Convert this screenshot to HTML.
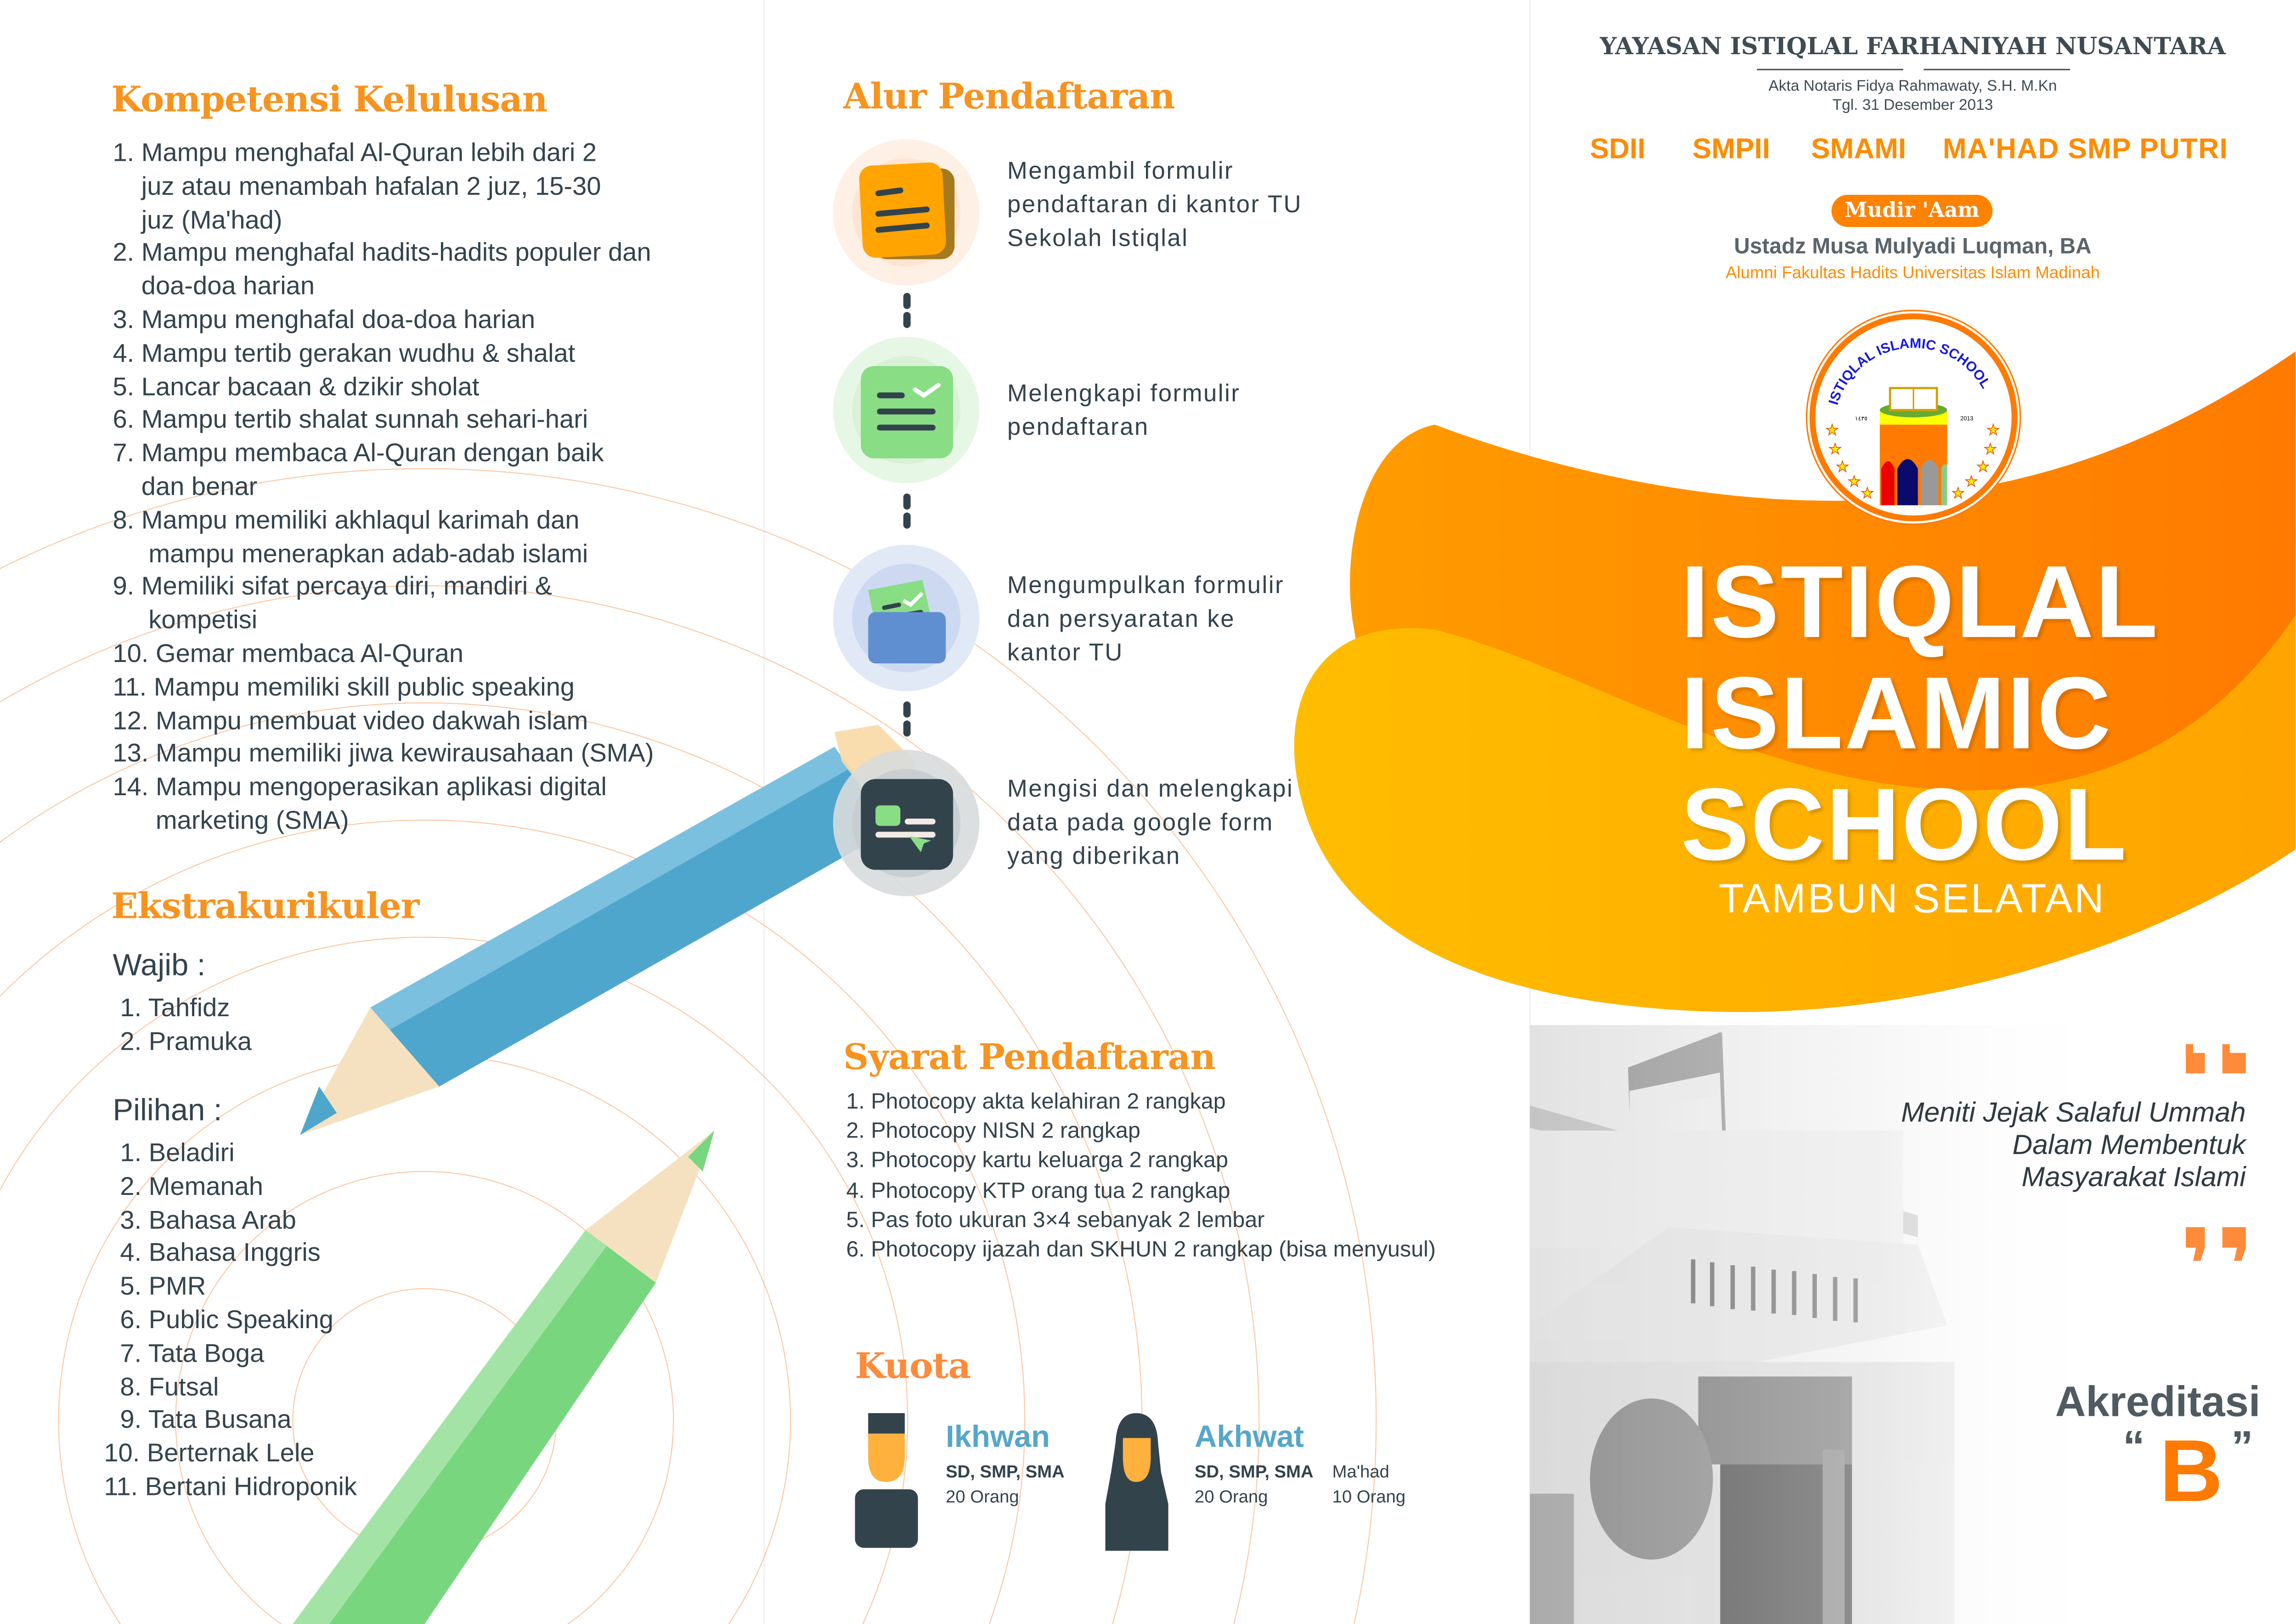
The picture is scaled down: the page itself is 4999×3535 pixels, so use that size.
<!DOCTYPE html>
<html><head><meta charset="utf-8">
<style>
html,body{margin:0;padding:0;background:#fff;overflow:hidden;width:4999px;height:3535px}
#wrap{width:1568px;height:1109px;position:absolute;left:0;top:0;overflow:hidden;transform:scale(3.18756);transform-origin:0 0;font-family:"Liberation Sans","DejaVu Sans",sans-serif;color:#33434c}
.abs{position:absolute;white-space:nowrap}
.h{font-family:"DejaVu Serif","Liberation Serif",serif;font-weight:bold;color:#f7931e;letter-spacing:-0.3px}
.list{font-size:17.6px;line-height:22.8px;color:#33434c}
.step{font-size:16.5px;line-height:23px;letter-spacing:0.8px}
</style></head><body><div id="wrap">

<svg class="abs" style="left:0;top:0" width="1568" height="1109" viewBox="0 0 1568 1109">
 <line x1="522" y1="0" x2="522" y2="1109" stroke="#f0f0f0" stroke-width="1"/>
 <line x1="1045" y1="0" x2="1045" y2="1109" stroke="#f0f0f0" stroke-width="1"/>
 <g fill="none" stroke="#f9a66c" stroke-width="0.7" opacity="0.6">
  <circle cx="290" cy="970" r="90"/>
  <circle cx="290" cy="970" r="170"/>
  <circle cx="290" cy="970" r="250"/>
  <circle cx="290" cy="970" r="330"/>
  <circle cx="290" cy="970" r="410"/>
  <circle cx="290" cy="970" r="490"/>
  <circle cx="290" cy="970" r="570"/>
  <circle cx="290" cy="970" r="650"/>
 </g>
 <defs>
  <linearGradient id="g1" x1="0" y1="0" x2="1" y2="0"><stop offset="0" stop-color="#ff9c00"/><stop offset="1" stop-color="#ff7a00"/></linearGradient>
  <linearGradient id="g2" x1="0" y1="0" x2="1" y2="0"><stop offset="0" stop-color="#ffbd00"/><stop offset="1" stop-color="#ffa400"/></linearGradient>
  <linearGradient id="ph" x1="0" y1="0" x2="1" y2="0"><stop offset="0" stop-color="#e2e2e2"/><stop offset="0.55" stop-color="#f2f2f2"/><stop offset="1" stop-color="#ffffff"/></linearGradient>
  <linearGradient id="fade" x1="0" y1="0" x2="1" y2="0"><stop offset="0" stop-color="#fff" stop-opacity="0"/><stop offset="0.6" stop-color="#fff" stop-opacity="0.3"/><stop offset="1" stop-color="#fff" stop-opacity="1"/></linearGradient>
 </defs>
 <path d="M1568 240 C1480 300 1400 330 1300 340 C1180 350 1060 320 980 290 C930 300 915 380 925 430 C930 470 960 520 1000 560 L1568 560 Z" fill="url(#g1)"/>
 <path d="M1568 420 C1500 520 1400 560 1260 530 C1150 505 1060 450 980 430 C900 420 870 480 890 550 C910 620 980 680 1150 690 C1320 700 1480 640 1568 580 Z" fill="url(#g2)"/>
 <rect x="1045" y="700" width="400" height="409" fill="url(#ph)"/>
 <g opacity="0.75">
  <polygon points="1112,729 1175,705 1177,745 1113,760" fill="#888"/>
  <polygon points="1113,745 1177,732 1177,747 1113,760" fill="#e8e8e8"/>
  <line x1="1175" y1="705" x2="1190" y2="1109" stroke="#888" stroke-width="2.5"/>
  <polygon points="1045,755 1310,830 1310,845 1045,770" fill="#bbb"/>
  <rect x="1045" y="772" width="255" height="80" fill="#e8e8e8"/>
  <polygon points="1045,905 1140,838 1310,850 1330,905 1045,960" fill="#e0e0e0"/>
  <g fill="#555"><rect x="1155" y="860" width="3" height="30"/><rect x="1168" y="862" width="3" height="30"/><rect x="1182" y="864" width="3" height="30"/><rect x="1196" y="865" width="3" height="30"/><rect x="1210" y="867" width="3" height="30"/><rect x="1224" y="868" width="3" height="30"/><rect x="1238" y="870" width="3" height="30"/><rect x="1252" y="872" width="3" height="30"/><rect x="1266" y="873" width="3" height="30"/></g>
  <rect x="1045" y="930" width="290" height="179" fill="#d8d8d8"/>
  <rect x="1160" y="940" width="105" height="60" fill="#666"/>
  <rect x="1175" y="1000" width="90" height="109" fill="#333"/>
  <rect x="1245" y="990" width="15" height="119" fill="#777"/>
  <ellipse cx="1128" cy="1010" rx="42" ry="55" fill="#777"/>
  <rect x="1045" y="1020" width="30" height="89" fill="#999"/>
 </g>
 <rect x="1045" y="700" width="400" height="409" fill="url(#fade)"/>
 <g>
  <polygon points="253,688 570,510 610,566 300,742" fill="#4fa6cc"/>
  <polygon points="253,688 570,510 580,525 265,704" fill="#7cc0df"/>
  <polygon points="253,688 300,742 205,775" fill="#f5e1c0"/>
  <polygon points="218,742 230,760 205,775" fill="#4fa6cc"/>
  <polygon points="570,500 600,495 625,520 610,566 575,520" fill="#f8d9a6" opacity="0.9"/>
  <polygon points="200,1109 400,840 448,876 290,1109" fill="#78d67f"/>
  <polygon points="200,1109 400,840 415,850 225,1109" fill="#a3e4a6"/>
  <polygon points="400,840 448,876 488,772" fill="#f5e1c0"/>
  <polygon points="470,790 488,772 480,800" fill="#78d67f"/>
 </g>
 <circle cx="619" cy="145" r="50" fill="#fff0e6"/><circle cx="619" cy="145" r="37" fill="#fde5d3"/>
 <rect x="597" y="115" width="55" height="62" rx="9" fill="#a57a1e"/>
 <rect x="588" y="112" width="57" height="63" rx="9" fill="#ffa400" transform="rotate(-3 616 143)"/>
 <g stroke="#33434c" stroke-width="4" stroke-linecap="round"><line x1="600" y1="132" x2="615" y2="130"/><line x1="600" y1="146" x2="633" y2="143"/><line x1="600" y1="157" x2="633" y2="154"/></g>
 <circle cx="619" cy="280" r="50" fill="#e7f7e6"/><circle cx="619" cy="280" r="37" fill="#d9f2d6"/>
 <rect x="588" y="250" width="63" height="63" rx="9" fill="#88dd85"/>
 <g stroke="#33434c" stroke-width="4" stroke-linecap="round"><line x1="601" y1="270" x2="616" y2="270"/><line x1="601" y1="281" x2="637" y2="281"/><line x1="601" y1="292" x2="637" y2="292"/></g>
 <polyline points="625,266 631,270 641,263" fill="none" stroke="#fff" stroke-width="3" stroke-linecap="round"/>
 <circle cx="619" cy="422" r="50" fill="#e1e8f6"/><circle cx="619" cy="422" r="37" fill="#ccd9f1"/>
 <polygon points="593,403 630,396 638,430 600,437" fill="#88dd85"/>
 <g stroke="#33434c" stroke-width="3" stroke-linecap="round"><line x1="604" y1="415" x2="614" y2="413"/><line x1="605" y1="422" x2="629" y2="418"/></g>
 <polyline points="617,410 622,413 630,405" fill="none" stroke="#fff" stroke-width="2.5"/>
 <rect x="593" y="418" width="53" height="35" rx="5" fill="#608fd1"/>
 <circle cx="619" cy="562" r="50" fill="#d8dcdd" opacity="0.9"/><circle cx="619" cy="562" r="37" fill="#c7cdd0" opacity="0.9"/>
 <rect x="588" y="532" width="63" height="62" rx="10" fill="#33434c"/>
 <rect x="598" y="550" width="17" height="14" rx="3" fill="#88dd85"/>
 <g stroke="#f3e9e4" stroke-width="4" stroke-linecap="round"><line x1="620" y1="561" x2="637" y2="561"/><line x1="600" y1="570" x2="637" y2="570"/></g>
 <polygon points="621,571 636,574 631,576 629,582" fill="#88dd85"/>
 <g fill="#33434c"><rect x="617" y="200" width="5" height="11" rx="2.5"/><rect x="617" y="213" width="5" height="11" rx="2.5"/>
  <rect x="617" y="337" width="5" height="11" rx="2.5"/><rect x="617" y="350" width="5" height="11" rx="2.5"/>
  <rect x="617" y="479" width="5" height="11" rx="2.5"/><rect x="617" y="492" width="5" height="11" rx="2.5"/></g>
 <rect x="593" y="965" width="25" height="14" fill="#33434c"/>
 <path d="M593 979 H618 V995 Q618 1012 605 1012 Q593 1012 593 995 Z" fill="#ffb13d"/>
 <rect x="584" y="1017" width="43" height="40" rx="6" fill="#33434c"/>
 <path d="M755 1027 L755 1059 H798 V1027 L793 1005 L791 985 Q790 965 776 965 Q763 965 762 985 L759 1005 Z" fill="#33434c"/>
 <path d="M767 982 H786 V995 Q786 1012 776 1012 Q767 1012 767 995 Z" fill="#ffb13d"/>
 <g transform="translate(1307,285)">
  <circle cx="0" cy="0" r="73" fill="#fff" stroke="#ff7a00" stroke-width="1"/>
  <circle cx="0" cy="0" r="69" fill="none" stroke="#ff7a00" stroke-width="4"/>
  <rect x="-23" y="-5" width="46" height="10" fill="#ffff00"/>
  <ellipse cx="0" cy="-5" rx="23" ry="5" fill="#66aa33"/>
  <rect x="-23" y="5" width="46" height="55" fill="#ff7a00"/>
  <path d="M-22 60 V35 Q-17 25 -13 35 V60Z" fill="#e00"/>
  <path d="M-11 60 V35 Q-4 22 3 35 V60Z" fill="#0a0a6a"/>
  <path d="M5 60 V35 Q11 23 17 35 V60Z" fill="#999"/>
  <path d="M19 60 V35 Q21 30 23 33 V60Z" fill="#8c8"/>
  <rect x="-16" y="-20" width="32" height="15" fill="#fff" stroke="#d4a000" stroke-width="1.5"/>
  <line x1="0" y1="-20" x2="0" y2="-5" stroke="#d4a000"/>
  <g fill="#ffea00" stroke="#e05000" stroke-width="0.5" font-size="10">
   <text x="-60" y="12">★</text><text x="-58" y="25">★</text><text x="-53" y="37">★</text><text x="-45" y="47">★</text><text x="-36" y="55">★</text>
   <text x="50" y="12">★</text><text x="48" y="25">★</text><text x="43" y="37">★</text><text x="35" y="47">★</text><text x="26" y="55">★</text>
  </g>
  <text x="-40" y="2" font-size="4" fill="#000">١٤٣٥</text><text x="32" y="2" font-size="4" fill="#000">2013</text>
  <path id="arc" d="M-52 -8 A54 54 0 0 1 52 -8" fill="none"/>
  <text font-size="9.5" fill="#1a1ad6" font-weight="bold"><textPath href="#arc" startOffset="0">ISTIQLAL ISLAMIC SCHOOL</textPath></text>
 </g>
 <g fill="#ff8a3a">
  <path d="M1493 713 h5 v6 h8 v14 h-13z M1518 713 h5 v6 h11 v14 h-16z"/>
  <path d="M1493 838 h13 v14 l-3 9 h-5 l2 -9 h-7z M1518 838 h16 v14 l-3 9 h-5 l2 -9 h-10z"/>
 </g>
</svg>

<div class="abs h" style="left:76px;top:53px;font-size:24px">Kompetensi Kelulusan</div>
<div class="abs list" style="left:77px;top:93px">
1. Mampu menghafal Al-Quran lebih dari 2<br>&nbsp;&nbsp;&nbsp;&nbsp;juz atau menambah hafalan 2 juz, 15-30<br>&nbsp;&nbsp;&nbsp;&nbsp;juz (Ma'had)<br>
2. Mampu menghafal hadits-hadits populer dan<br>&nbsp;&nbsp;&nbsp;&nbsp;doa-doa harian<br>
3. Mampu menghafal doa-doa harian<br>
4. Mampu tertib gerakan wudhu &amp; shalat<br>
5. Lancar bacaan &amp; dzikir sholat<br>
6. Mampu tertib shalat sunnah sehari-hari<br>
7. Mampu membaca Al-Quran dengan baik<br>&nbsp;&nbsp;&nbsp;&nbsp;dan benar<br>
8. Mampu memiliki akhlaqul karimah dan<br>&nbsp;&nbsp;&nbsp;&nbsp;&nbsp;mampu menerapkan adab-adab islami<br>
9. Memiliki sifat percaya diri, mandiri &amp;<br>&nbsp;&nbsp;&nbsp;&nbsp;&nbsp;kompetisi<br>
10. Gemar membaca Al-Quran<br>
11. Mampu memiliki skill public speaking<br>
12. Mampu membuat video dakwah islam<br>
13. Mampu memiliki jiwa kewirausahaan (SMA)<br>
14. Mampu mengoperasikan aplikasi digital<br>&nbsp;&nbsp;&nbsp;&nbsp;&nbsp;&nbsp;marketing (SMA)
</div>
<div class="abs h" style="left:76px;top:604px;font-size:24px">Ekstrakurikuler</div>
<div class="abs" style="left:77px;top:648px;font-size:21px">Wajib :</div>
<div class="abs list" style="left:82px;top:677px">1. Tahfidz<br>2. Pramuka</div>
<div class="abs" style="left:77px;top:747px;font-size:21px">Pilihan :</div>
<div class="abs list" style="left:82px;top:776px">1. Beladiri<br>2. Memanah<br>3. Bahasa Arab<br>4. Bahasa Inggris<br>5. PMR<br>6. Public Speaking<br>7. Tata Boga<br>8. Futsal<br>9. Tata Busana</div>
<div class="abs list" style="left:71px;top:981px">10. Berternak Lele<br>11. Bertani Hidroponik</div>

<div class="abs h" style="left:576px;top:51px;font-size:24px">Alur Pendaftaran</div>
<div class="abs step" style="left:688px;top:106px">Mengambil formulir<br>pendaftaran di kantor TU<br>Sekolah Istiqlal</div>
<div class="abs step" style="left:688px;top:258px">Melengkapi formulir<br>pendaftaran</div>
<div class="abs step" style="left:688px;top:389px">Mengumpulkan formulir<br>dan persyaratan ke<br>kantor TU</div>
<div class="abs step" style="left:688px;top:528px">Mengisi dan melengkapi<br>data pada google form<br>yang diberikan</div>

<div class="abs h" style="left:576px;top:707px;font-size:24px">Syarat Pendaftaran</div>
<div class="abs" style="left:578px;top:743px;font-size:15.2px;line-height:20.2px">
1. Photocopy akta kelahiran 2 rangkap<br>2. Photocopy NISN 2 rangkap<br>3. Photocopy kartu keluarga 2 rangkap<br>4. Photocopy KTP orang tua 2 rangkap<br>5. Pas foto ukuran 3×4 sebanyak 2 lembar<br>6. Photocopy ijazah dan SKHUN 2 rangkap (bisa menyusul)
</div>
<div class="abs h" style="left:584px;top:918px;font-size:24px;color:#ff8a3a">Kuota</div>
<div class="abs" style="left:646px;top:970px;font-size:21px;font-weight:bold;color:#55a7c9">Ikhwan</div>
<div class="abs" style="left:646px;top:997px;font-size:12px;line-height:17px"><b>SD, SMP, SMA</b><br>20 Orang</div>
<div class="abs" style="left:816px;top:970px;font-size:21px;font-weight:bold;color:#55a7c9">Akhwat</div>
<div class="abs" style="left:816px;top:997px;font-size:12px;line-height:17px"><b>SD, SMP, SMA</b><br>20 Orang</div>
<div class="abs" style="left:910px;top:997px;font-size:12px;line-height:17px">Ma'had<br>10 Orang</div>

<div class="abs" style="left:1045px;top:22px;width:523px;text-align:center;font-family:'DejaVu Serif',serif;font-weight:bold;font-size:16px;color:#3f4b52">YAYASAN ISTIQLAL FARHANIYAH NUSANTARA</div>
<div class="abs" style="left:1200px;top:47px;width:100px;border-top:1px solid #555"></div>
<div class="abs" style="left:1314px;top:47px;width:100px;border-top:1px solid #555"></div>
<div class="abs" style="left:1045px;top:53px;width:523px;text-align:center;font-size:10.5px;line-height:13px;color:#3f4b52">Akta Notaris Fidya Rahmawaty, S.H. M.Kn<br>Tgl. 31 Desember 2013</div>
<div class="abs" style="left:1086px;top:91px;font-size:19.5px;font-weight:bold;color:#ff8c00">SDII</div>
<div class="abs" style="left:1156px;top:91px;font-size:19.5px;font-weight:bold;color:#ff8c00">SMPII</div>
<div class="abs" style="left:1237px;top:91px;font-size:19.5px;font-weight:bold;color:#ff8c00">SMAMI</div>
<div class="abs" style="left:1327px;top:91px;font-size:19.5px;font-weight:bold;color:#ff8c00;letter-spacing:0.4px">MA'HAD SMP PUTRI</div>
<div class="abs" style="left:1251px;top:133px;width:110px;height:22px;border-radius:11px;background:#ff8200;color:#fff;text-align:center;font-family:'DejaVu Serif',serif;font-weight:bold;font-size:14px;line-height:22px">Mudir 'Aam</div>
<div class="abs" style="left:1045px;top:160px;width:523px;text-align:center;font-size:15px;font-weight:bold;color:#5a646b">Ustadz Musa Mulyadi Luqman, BA</div>
<div class="abs" style="left:1045px;top:181px;width:523px;text-align:center;font-size:11.5px;color:#ff8c00">Alumni Fakultas Hadits Universitas Islam Madinah</div>

<div class="abs" style="left:1148px;top:373px;font-size:70px;font-weight:bold;line-height:76px;color:#fff;letter-spacing:1px;text-shadow:2px 2px 2px rgba(0,0,0,0.15)">ISTIQLAL<br>ISLAMIC<br>SCHOOL</div>
<div class="abs" style="left:1174px;top:598px;font-size:28px;color:#fff;letter-spacing:1.2px">TAMBUN SELATAN</div>

<div class="abs" style="left:1240px;top:750px;width:294px;text-align:right;font-style:italic;font-size:19px;line-height:22px;color:#2e3a40">Meniti Jejak Salaful Ummah<br>Dalam Membentuk<br>Masyarakat Islami</div>
<div class="abs" style="left:1380px;top:942px;width:164px;text-align:right;font-size:29px;font-weight:bold;color:#4f5a61">Akreditasi</div>
<div class="abs" style="left:1450px;top:972px;font-size:30px;font-weight:bold;color:#4f5a61">“</div>
<div class="abs" style="left:1475px;top:972px;font-size:60px;font-weight:bold;color:#ff7a00;line-height:66px">B</div>
<div class="abs" style="left:1524px;top:972px;font-size:30px;font-weight:bold;color:#4f5a61">”</div>

</div></body></html>
